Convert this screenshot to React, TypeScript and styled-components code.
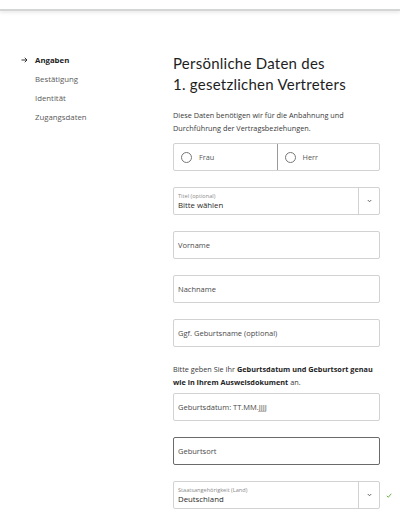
import React from 'react';
import styled, { createGlobalStyle } from 'styled-components';

const GlobalStyle = createGlobalStyle`
  html, body {
    margin: 0;
    padding: 0;
    background: #ffffff;
  }
  body {
    font-family: "Open Sans", "Noto Sans", "Liberation Sans", sans-serif;
    color: #222;
  }
`;

const NAV_ITEMS = ['Angaben', 'Bestätigung', 'Identität', 'Zugangsdaten'];

const TopBar = styled.div`
  height: 9px;
  background: #ffffff;
  border-bottom: 2px solid #d4d6d6;
  box-shadow: 0 2px 3px rgba(0, 0, 0, 0.08);
`;

const Page = styled.div`
  display: flex;
  padding: 39px 0 0 21px;
`;

const Sidebar = styled.nav`
  width: 152px;
  flex-shrink: 0;
  display: flex;
  flex-direction: column;
`;

const NavItem = styled.div<{ $active?: boolean }>`
  display: flex;
  align-items: center;
  height: 19px;
  font-size: 7.8px;
  font-weight: ${p => (p.$active ? 700 : 400)};
  color: ${p => (p.$active ? '#1d1d1d' : '#5a5a5a')};
`;

const NavArrow = styled.span`
  width: 14px;
  display: flex;
  align-items: center;
`;

const Main = styled.main`
  width: 207px;
  display: flex;
  flex-direction: column;
`;

const Heading = styled.h1`
  margin: 3px 0 0 0;
  font-family: Lato, "Open Sans", sans-serif;
  font-size: 15px;
  font-weight: 400;
  line-height: 21px;
  color: #1e1e1e;
  letter-spacing: 0.25px;
`;

const Intro = styled.p`
  margin: 14px 0 9px 0;
  font-size: 7.3px;
  line-height: 12.5px;
  color: #3a3a3a;
`;

const Notice = styled.p`
  margin: 0 -1px 0 0;
  font-size: 7.3px;
  line-height: 12.5px;
  color: #3a3a3a;

  b {
    font-weight: 700;
    color: #1e1e1e;
  }
`;

const Fields = styled.div`
  display: flex;
  flex-direction: column;
  gap: 16px;
`;

const NoticeBlock = styled.div`
  display: flex;
  flex-direction: column;
  gap: 5px;
`;

const RadioGroup = styled.div`
  display: grid;
  grid-template-columns: 1fr 1fr;
  height: 28px;
  border: 1px solid #d2d2d2;
  border-radius: 2px;
  box-sizing: border-box;
`;

const RadioOption = styled.label<{ $divider?: boolean }>`
  display: flex;
  align-items: center;
  gap: 7px;
  padding-left: 7px;
  font-size: 7.3px;
  color: #555;
  border-left: ${p => (p.$divider ? '1px solid #9a9a9a' : 'none')};
`;

const RadioCircle = styled.span`
  width: 11px;
  height: 11px;
  border: 1px solid #777;
  border-radius: 50%;
  box-sizing: border-box;
  background: #fff;
`;

const TextField = styled.div<{ $strong?: boolean }>`
  height: 28px;
  box-sizing: border-box;
  border: 1px solid ${p => (p.$strong ? '#6a6a6a' : '#d2d2d2')};
  border-radius: 2px;
  display: flex;
  align-items: center;
  padding-left: 4px;
  font-size: 7.5px;
  color: #4a4a4a;
`;

const SelectRow = styled.div`
  position: relative;
`;

const SelectBox = styled.div`
  height: 28px;
  box-sizing: border-box;
  border: 1px solid #d2d2d2;
  border-radius: 2px;
  display: flex;
`;

const SelectValue = styled.div`
  flex: 1;
  display: flex;
  flex-direction: column;
  justify-content: center;
  padding-left: 4px;
`;

const SelectLabel = styled.span`
  font-size: 5.6px;
  line-height: 8px;
  color: #8a8a8a;
`;

const SelectText = styled.span`
  font-size: 7.8px;
  line-height: 11px;
  color: #2a2a2a;
`;

const SelectToggle = styled.div`
  width: 20px;
  border-left: 1px solid #d2d2d2;
  display: flex;
  align-items: center;
  justify-content: center;
`;

const ValidMark = styled.span`
  position: absolute;
  left: 213px;
  top: 0;
  height: 28px;
  display: flex;
  align-items: center;
`;

const Chevron = () => (
  <svg width="5" height="4" viewBox="0 0 10 7">
    <path d="M1.5 1.5 L5 5 L8.5 1.5" fill="none" stroke="#555" strokeWidth="1.8" />
  </svg>
);

const Check = () => (
  <svg width="6" height="5" viewBox="0 0 12 10">
    <path d="M1.5 5.5 L4.5 8.5 L10.5 1.5" fill="none" stroke="#5aa832" strokeWidth="1.8" />
  </svg>
);

const Arrow = () => (
  <svg width="7" height="6" viewBox="0 0 14 12">
    <path d="M1 6 H12 M7.5 1.5 L12 6 L7.5 10.5" fill="none" stroke="#222" strokeWidth="1.8" />
  </svg>
);

const Select = ({ label, value, valid }: { label: string; value: string; valid?: boolean }) => (
  <SelectRow>
    <SelectBox>
      <SelectValue>
        <SelectLabel>{label}</SelectLabel>
        <SelectText>{value}</SelectText>
      </SelectValue>
      <SelectToggle>
        <Chevron />
      </SelectToggle>
    </SelectBox>
    {valid && (
      <ValidMark>
        <Check />
      </ValidMark>
    )}
  </SelectRow>
);

export default function App() {
  return (
    <>
      <GlobalStyle />
      <TopBar />
      <Page>
        <Sidebar>
          {NAV_ITEMS.map((item, index) => (
            <NavItem key={item} $active={index === 0}>
              <NavArrow>{index === 0 && <Arrow />}</NavArrow>
              {item}
            </NavItem>
          ))}
        </Sidebar>

        <Main>
          <Heading>
            Persönliche Daten des
            <br />
            1. gesetzlichen Vertreters
          </Heading>
          <Intro>
            Diese Daten benötigen wir für die Anbahnung und Durchführung der
            Vertragsbeziehungen.
          </Intro>

          <Fields>
            <RadioGroup>
              <RadioOption>
                <RadioCircle />
                Frau
              </RadioOption>
              <RadioOption $divider>
                <RadioCircle />
                Herr
              </RadioOption>
            </RadioGroup>

            <Select label="Titel (optional)" value="Bitte wählen" />
            <TextField>Vorname</TextField>
            <TextField>Nachname</TextField>
            <TextField>Ggf. Geburtsname (optional)</TextField>

            <NoticeBlock>
              <Notice>
                Bitte geben Sie Ihr <b>Geburtsdatum und Geburtsort genau wie in Ihrem Ausweisdokument</b> an.
              </Notice>
              <TextField>Geburtsdatum: TT.MM.JJJJ</TextField>
            </NoticeBlock>

            <TextField $strong>Geburtsort</TextField>
            <Select label="Staatsangehörigkeit (Land)" value="Deutschland" valid />
          </Fields>
        </Main>
      </Page>
    </>
  );
}
